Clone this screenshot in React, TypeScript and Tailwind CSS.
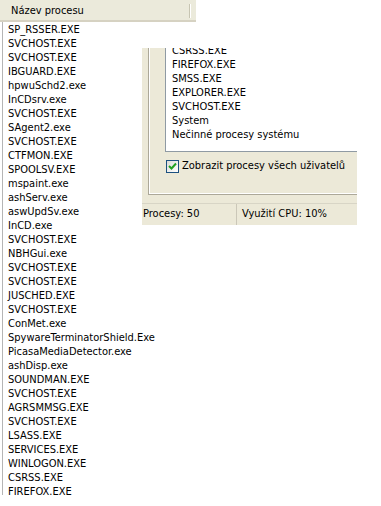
import React from 'react';

const processes = [
  'SP_RSSER.EXE', 'SVCHOST.EXE', 'SVCHOST.EXE', 'IBGUARD.EXE', 'hpwuSchd2.exe', 'InCDsrv.exe',
  'SVCHOST.EXE', 'SAgent2.exe', 'SVCHOST.EXE', 'CTFMON.EXE', 'SPOOLSV.EXE', 'mspaint.exe',
  'ashServ.exe', 'aswUpdSv.exe', 'InCD.exe', 'SVCHOST.EXE', 'NBHGui.exe', 'SVCHOST.EXE',
  'SVCHOST.EXE', 'JUSCHED.EXE', 'SVCHOST.EXE', 'ConMet.exe', 'SpywareTerminatorShield.Exe',
  'PicasaMediaDetector.exe', 'ashDisp.exe', 'SOUNDMAN.EXE', 'SVCHOST.EXE', 'AGRSMMSG.EXE',
  'SVCHOST.EXE', 'LSASS.EXE', 'SERVICES.EXE', 'WINLOGON.EXE', 'CSRSS.EXE', 'FIREFOX.EXE',
];

const windowRows = ['CSRSS.EXE', 'FIREFOX.EXE', 'SMSS.EXE', 'EXPLORER.EXE', 'SVCHOST.EXE', 'System', 'Nečinné procesy systému'];

const CheckBox = () => (
  <div className="w-[13px] h-[13px] border border-[#1c5180] bg-gradient-to-br from-[#dcdcd7] to-white flex items-center justify-center shrink-0">
    <svg width="9" height="9" viewBox="0 0 9 9">
      <path d="M1 4 L3.5 6.5 L8 1.5" stroke="#21a121" strokeWidth="2" fill="none" />
    </svg>
  </div>
);

const TaskWindow = () => {
  return (
    <div className="w-[215px] h-[177px] bg-[#ece9d8] flex flex-col overflow-hidden">
      <div className="h-[147px] pl-[6px] shrink-0">
        <div className="h-full border-l border-b border-[#aca899] shadow-[inset_1px_-1px_0_#fff] pl-[16px] flex flex-col">
          <div className="h-[104px] bg-white border-l border-b border-[#8f9aa3] pl-[6px] overflow-hidden">
            <div className="-mt-[4px]">
              {windowRows.map((r, i) => (
                <div key={i} className="h-[14px] leading-[14px] whitespace-nowrap">{r}</div>
              ))}
            </div>
          </div>
          <div className="flex items-center gap-[3px] mt-[7px] ml-[1px]">
            <CheckBox />
            <span className="leading-[14px] whitespace-nowrap">Zobrazit procesy všech uživatelů</span>
          </div>
        </div>
      </div>
      <div className="mt-[8px] flex-1 flex items-center border-t border-[#d8d5c6]">
        <div className="w-[95px] h-full flex items-center pl-[1px] border-r border-[#cbc7b8]">Procesy: 50</div>
        <div className="pl-[5px] whitespace-nowrap">Využití CPU: 10%</div>
      </div>
    </div>
  );
};

export default function App() {
  return (
    <div
      className="w-[381px] h-[506px] bg-white overflow-hidden text-[11px] text-black"
      style={{ fontFamily: '"DejaVu Sans Condensed", "DejaVu Sans", sans-serif', fontStretch: 'condensed' }}
    >
      <div className="w-[196px] h-[22px] bg-[#ebeadb] border-b-[2px] border-[#d6d2c2] flex items-center">
        <span className="pl-[11px] pt-[3px]">Název procesu</span>
        <div className="ml-auto mr-[5px] mt-[2px] w-[2px] h-[14px] border-l border-[#c7c5b2] border-r border-r-white" />
      </div>
      <div className="flex">
        <div className="ml-[2px] w-[140px] shrink-0 border-l border-[#b5b5b5] pl-[5px] pt-[1px] h-[473px]">
          {processes.map((p, i) => (
            <div key={i} className="h-[14px] leading-[14px] whitespace-nowrap">{p}</div>
          ))}
        </div>
        <div className="mt-[26px]">
          <TaskWindow />
        </div>
      </div>
    </div>
  );
}
